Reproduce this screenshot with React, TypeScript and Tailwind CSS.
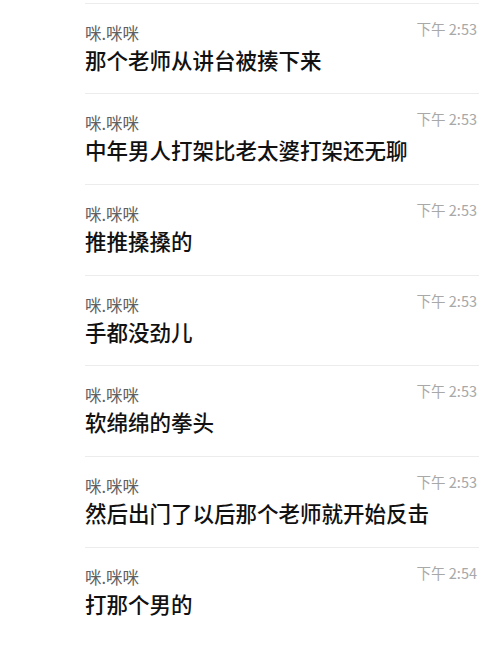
import React from 'react';

interface Message {
    name: string;
    time: string;
    text: string;
}

const messages: Message[] = [
    { name: '咪.咪咪', time: '下午 2:53', text: '那个老师从讲台被揍下来' },
    { name: '咪.咪咪', time: '下午 2:53', text: '中年男人打架比老太婆打架还无聊' },
    { name: '咪.咪咪', time: '下午 2:53', text: '推推搡搡的' },
    { name: '咪.咪咪', time: '下午 2:53', text: '手都没劲儿' },
    { name: '咪.咪咪', time: '下午 2:53', text: '软绵绵的拳头' },
    { name: '咪.咪咪', time: '下午 2:53', text: '然后出门了以后那个老师就开始反击' },
    { name: '咪.咪咪', time: '下午 2:54', text: '打那个男的' },
];

const MessageRow: React.FC<{ message: Message }> = ({ message }) => (
    <div className="h-[90.7px] border-t border-[#ececec] pt-[19px] pr-[2px]">
        <div className="flex items-start justify-between h-[21px]">
            <span className="text-[16.5px] leading-[21px] text-[#606060]">{message.name}</span>
            <span className="text-[14.5px] leading-[21px] text-[#a8a8a8] -mt-[5px]">{message.time}</span>
        </div>
        <p className="mt-[1px] text-[21.5px] leading-[30px] font-medium text-[#111111] whitespace-nowrap">
            {message.text}
        </p>
    </div>
);

const App: React.FC = () => {
    return (
        <div
            className="w-[500px] h-[645px] overflow-hidden bg-white pt-[2.5px] pl-[85px] pr-[21px]"
            style={{ fontFamily: '"Noto Sans CJK SC", "Noto Sans", sans-serif' }}
        >
            {messages.map((m, i) => (
                <MessageRow key={i} message={m} />
            ))}
        </div>
    );
};

export default App;
